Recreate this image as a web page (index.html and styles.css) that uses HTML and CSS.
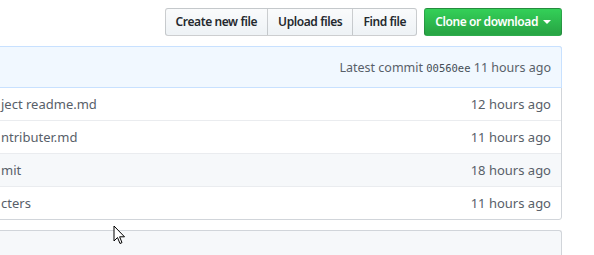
FILE: index.html
```html
<!DOCTYPE html>
<html>
<head>
<meta charset="utf-8">
<link rel="stylesheet" href="styles.css">
</head>
<body>
<div class="page">
  <div class="toolbar">
    <div class="btn-group">
      <button class="btn">Create new file</button>
      <button class="btn">Upload files</button>
      <button class="btn">Find file</button>
    </div>
    <button class="btn btn-primary">Clone or download<span class="caret"></span></button>
  </div>

  <div class="files">
    <div class="commit-tease">
      <span>Latest commit <code class="sha">00560ee</code> 11 hours ago</span>
    </div>
    <div class="row">
      <span class="message">ject readme.md</span>
      <span class="age">12 hours ago</span>
    </div>
    <div class="row">
      <span class="message">ntributer.md</span>
      <span class="age">11 hours ago</span>
    </div>
    <div class="row hover">
      <span class="message">mit</span>
      <span class="age">18 hours ago</span>
    </div>
    <div class="row">
      <span class="message">cters</span>
      <span class="age">11 hours ago</span>
    </div>
  </div>

  <div class="readme"></div>

  <svg class="cursor" width="13" height="21" viewBox="0 0 13 21">
    <path d="M1 1 L1 16 L4.5 12.5 L7 18.5 L9 17.6 L6.6 11.8 L11.5 11.8 Z" fill="#fff" stroke="#000" stroke-width="1" stroke-linejoin="miter"/>
  </svg>
</div>
</body>
</html>
```

FILE: styles.css
```css
html, body {
  margin: 0;
  padding: 0;
  background: #fff;
  overflow: hidden;
}

.page {
  position: relative;
  width: 594px;
  height: 255px;
  overflow: hidden;
  font-family: "Noto Sans", "Open Sans", "Liberation Sans", sans-serif;
  font-size: 13px;
  color: #24292e;
}

.toolbar {
  display: flex;
  justify-content: flex-end;
  align-items: flex-start;
  gap: 7px;
  padding: 8px 32px 0 0;
  height: 28px;
}

.btn-group {
  display: flex;
}

.btn {
  font-family: inherit;
  font-size: 12px;
  font-weight: 600;
  letter-spacing: -0.4px;
  line-height: 20px;
  height: 28px;
  padding: 3px 10px;
  color: #24292e;
  background: linear-gradient(180deg, #fafbfc, #eff3f6 90%);
  border: 1px solid rgba(27, 31, 35, 0.2);
  border-radius: 3px;
  white-space: nowrap;
  cursor: pointer;
}

.btn-group .btn {
  border-radius: 0;
  margin-left: -1px;
}
.btn-group .btn:first-child {
  border-radius: 3px 0 0 3px;
  margin-left: 0;
}
.btn-group .btn:last-child {
  border-radius: 0 3px 3px 0;
}

.btn-primary {
  color: #fff;
  background: linear-gradient(180deg, #34d058, #28a745 90%);
  padding: 3px 10px;
}

.caret {
  display: inline-block;
  width: 0;
  height: 0;
  margin-left: 5px;
  vertical-align: middle;
  border-top: 4px solid #fff;
  border-left: 4px solid transparent;
  border-right: 4px solid transparent;
  position: relative;
  top: -1px;
}

.files {
  margin: 10px 32px 0 -10px;
  border: 1px solid #d1d5da;
  border-radius: 3px;
}

.commit-tease {
  display: flex;
  justify-content: flex-end;
  align-items: center;
  height: 40px;
  padding: 0 10px;
  background: #f1f8ff;
  border-top: 1px solid #c8e1ff;
  border-right: 1px solid #c8e1ff;
  border-bottom: 1px solid #c8e1ff;
  border-radius: 3px 3px 0 0;
  color: #586069;
  font-size: 12.5px;
  margin: -1px -1px 0 -1px;
}

.sha {
  font-family: "DejaVu Sans Mono", "Liberation Mono", monospace;
  font-size: 10.5px;
  color: #444d56;
}

.row {
  display: flex;
  justify-content: space-between;
  align-items: center;
  height: 32px;
  padding: 0 10px;
  border-top: 1px solid #eaecef;
  color: #586069;
}
.commit-tease + .row {
  border-top: none;
}

.row.hover {
  background: #f6f8fa;
}

.row:last-child {
  border-radius: 0 0 3px 3px;
}

.readme {
  margin: 10px 32px 0 -10px;
  height: 40px;
  background: #f6f8fa;
  border: 1px solid #d1d5da;
  border-radius: 3px 3px 0 0;
  border-bottom: none;
}

.cursor {
  position: absolute;
  left: 113px;
  top: 225px;
}
```
